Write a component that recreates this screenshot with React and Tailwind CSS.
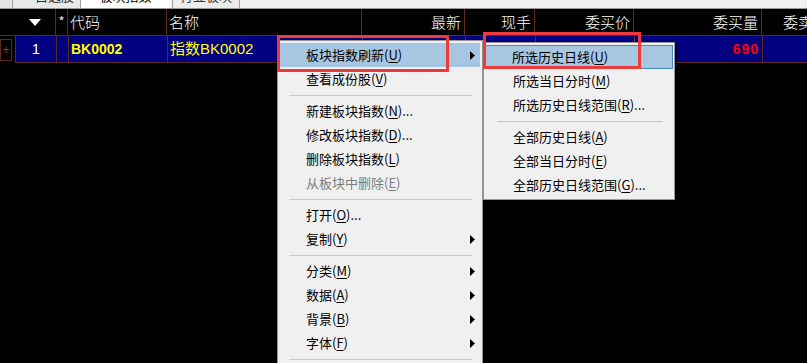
import React from 'react'

const cjk = { fontFamily: '"Noto Sans CJK SC", "Noto Sans", sans-serif' }
const latin = { fontFamily: '"Liberation Sans", "Noto Sans CJK SC", sans-serif' }

const cols = [
  { key: 'no', w: 'w-[40px]', head: '', align: 'justify-center' },
  { key: 'star', w: 'w-[12px]', head: '*', align: 'justify-center' },
  { key: 'code', w: 'w-[99px]', head: '代码', align: 'justify-start pl-[2px]' },
  { key: 'name', w: 'w-[195px]', head: '名称', align: 'justify-start pl-[2px]' },
  { key: 'last', w: 'w-[103px]', head: '最新', align: 'justify-end pr-[3px]' },
  { key: 'vol', w: 'w-[70px]', head: '现手', align: 'justify-end pr-[3px]' },
  { key: 'bid', w: 'w-[99px]', head: '委买价', align: 'justify-end pr-[3px]' },
  { key: 'bidv', w: 'w-[128px]', head: '委买量', align: 'justify-end pr-[3px]' },
  { key: 'ask', w: 'flex-1', head: '委卖', align: 'justify-start pl-[21px]' },
]

function Arrow() {
  return (
    <svg width="5" height="9" viewBox="0 0 5 9" className="absolute right-[5px] top-[8px]">
      <path d="M0 0 L5 4.5 L0 9 Z" fill="#000" />
    </svg>
  )
}

function Label({ text, k, tail = '' }) {
  return (
    <span>
      {text}(<span className="underline underline-offset-2">{k}</span>){tail}
    </span>
  )
}

function Item({ text, k, tail, sub, active, disabled }) {
  return (
    <div className={`relative h-[24px] flex items-center pl-[26px] text-[13px] ${disabled ? 'text-[#7b7b7b]' : 'text-black'} ${active ? 'bg-[#a7c6e2]' : ''}`}>
      <Label text={text} k={k} tail={tail} />
      {sub && <Arrow />}
    </div>
  )
}

function Sep({ ml = 'ml-[9px]', mr = 'mr-[8px]' }) {
  return (
    <div className="h-[8px] flex items-center">
      <div className={`h-px flex-1 bg-[#c8c8c8] ${ml} ${mr}`} />
    </div>
  )
}

function SubItem({ text, k, tail, active }) {
  return (
    <div className={`h-[24px] flex items-center text-[13px] text-black ${active ? 'bg-[#a7c6e2] border border-[#4b86c0] pl-[26px] mx-[-1px]' : 'pl-[27px]'}`}>
      <Label text={text} k={k} tail={tail} />
    </div>
  )
}

export default function App() {
  return (
    <div className="relative w-[807px] h-[363px] bg-black overflow-hidden" style={cjk}>
      <div className="h-[9px] flex bg-[#f0f0f0] border-b border-[#9a9a9a] overflow-hidden">
        <div className="w-[12px] bg-[#e4e4e4]" />
        <div className="w-[68px] bg-[#e8e8e8] border-l border-[#a0a0a0] overflow-hidden flex justify-end pr-[6px]">
          <span className="text-[13px] leading-none text-[#333] -mt-[11px]">自选股</span>
        </div>
        <div className="w-[90px] bg-white border-l border-[#a0a0a0] overflow-hidden flex justify-center">
          <span className="text-[13px] leading-none text-black -mt-[11px]">板块指数</span>
        </div>
        <div className="w-[68px] bg-[#ececec] border-l border-r border-[#a0a0a0] overflow-hidden flex justify-center ml-[2px]">
          <span className="text-[13px] leading-none text-[#333] -mt-[11px]">行业板块</span>
        </div>
        <div className="flex-1" />
      </div>

      <div className="h-[27px] flex border-b border-[#5e2a1c]">
        <div className="w-[15px]" />
        {cols.map((c, i) => (
          <div key={c.key} className={`${c.w} flex items-center ${c.align} ${i > 0 ? 'border-l border-[#5e2a1c]' : ''} text-white text-[15px] font-light whitespace-nowrap overflow-hidden`}>
            {c.key === 'no' ? (
              <svg width="12" height="7" viewBox="0 0 12 7" className="mt-[1px]"><path d="M0 0 H12 L6 7 Z" fill="#fff" /></svg>
            ) : c.head}
          </div>
        ))}
      </div>

      <div className="h-[27px] flex">
        <div className="w-[15px] flex items-center">
          <div className="w-[12px] h-[22px] border border-[#5e2a1c] flex items-center justify-center text-[#7a4a30] text-[12px] leading-none" style={latin}>+</div>
        </div>
        <div className="flex-1 flex bg-[#000080] border-l border-b border-[#5e2a1c]">
          {cols.map((c, i) => (
            <div key={c.key} className={`${c.w} flex items-center ${c.align} ${i > 0 ? 'border-l border-[#5e2a1c]' : ''} whitespace-nowrap overflow-hidden`}>
              {c.key === 'no' && <span className="text-white text-[15px]" style={latin}>1</span>}
              {c.key === 'code' && <span className="text-[#ffff00] text-[14px] font-bold" style={latin}>BK0002</span>}
              {c.key === 'name' && <span className="text-[#ffff00] text-[15px]" style={latin}>指数BK0002</span>}
              {c.key === 'bidv' && <span className="text-[#ff0000] text-[14px] font-bold tracking-[1px]" style={latin}>690</span>}
            </div>
          ))}
        </div>
      </div>

      <div className="absolute left-[277px] top-[40px] w-[206px] h-[340px] bg-[#f0f0f0] border border-[#979797] p-[2px] shadow-[2px_2px_3px_rgba(0,0,0,0.6)]">
        <Item text="板块指数刷新" k="U" sub active />
        <Item text="查看成份股" k="V" />
        <Sep />
        <Item text="新建板块指数" k="N" tail="..." />
        <Item text="修改板块指数" k="D" tail="..." />
        <Item text="删除板块指数" k="L" />
        <Item text="从板块中删除" k="E" disabled />
        <Sep />
        <Item text="打开" k="O" tail="..." />
        <Item text="复制" k="Y" sub />
        <Sep />
        <Item text="分类" k="M" sub />
        <Item text="数据" k="A" sub />
        <Item text="背景" k="B" sub />
        <Item text="字体" k="F" sub />
        <Sep />
      </div>

      <div className="absolute left-[483px] top-[42px] w-[192px] bg-[#f0f0f0] border border-[#979797] p-[2px] shadow-[2px_2px_3px_rgba(0,0,0,0.6)]">
        <SubItem text="所选历史日线" k="U" active />
        <SubItem text="所选当日分时" k="M" />
        <SubItem text="所选历史日线范围" k="R" tail="..." />
        <Sep ml="ml-[11px]" mr="mr-[9px]" />
        <SubItem text="全部历史日线" k="A" />
        <SubItem text="全部当日分时" k="E" />
        <SubItem text="全部历史日线范围" k="G" tail="..." />
      </div>

      <div className="absolute left-[277px] top-[35px] w-[172px] h-[37px] border-[3px] border-[#ef3a3a]" />
      <div className="absolute left-[483px] top-[32px] w-[158px] h-[37px] border-[3px] border-[#ef3a3a]" />
    </div>
  )
}
